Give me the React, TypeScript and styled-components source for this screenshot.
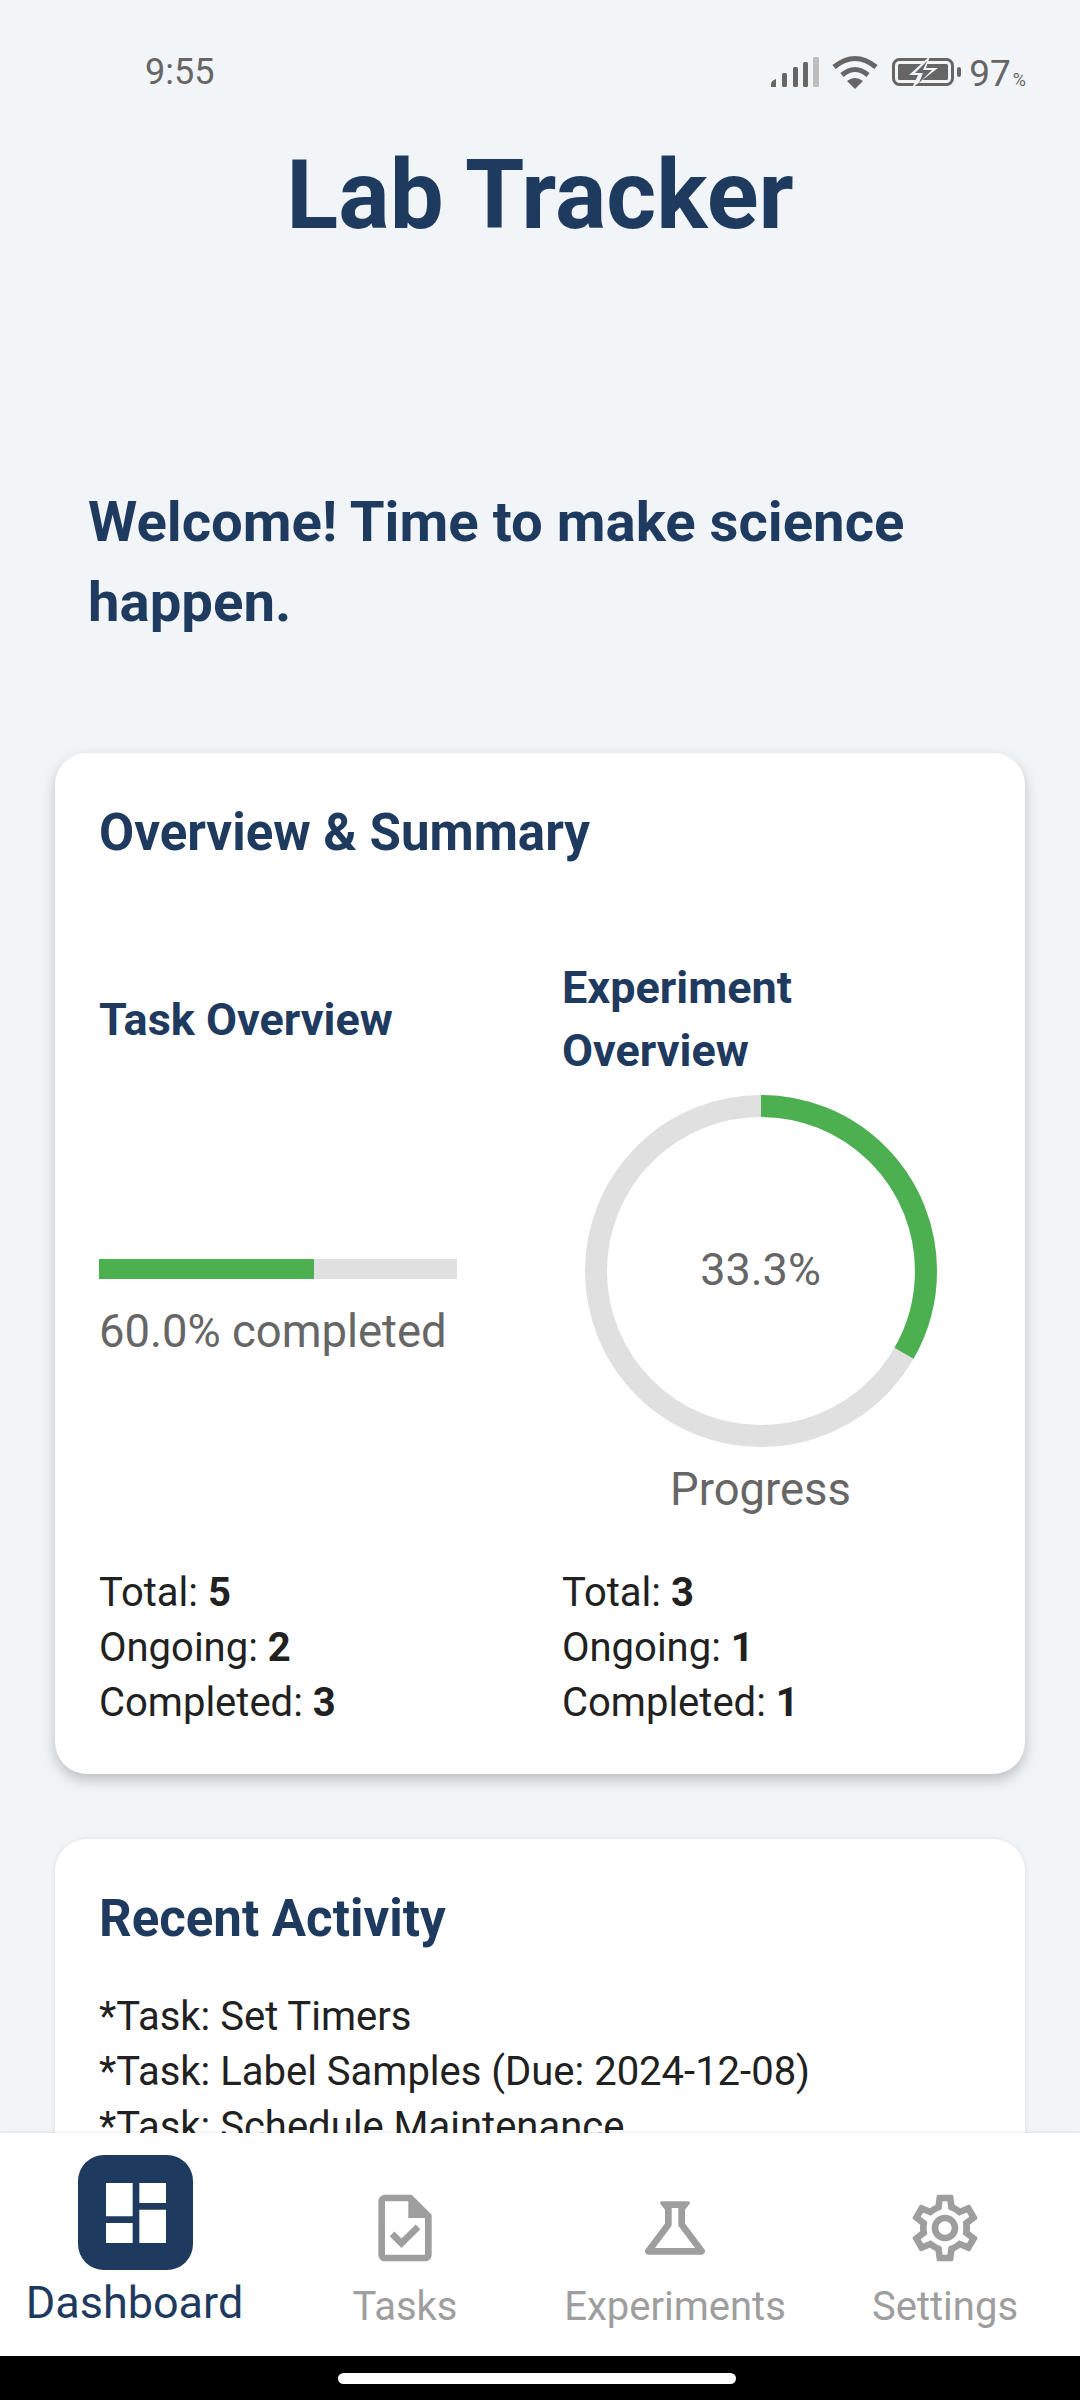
import React from "react";
import styled, { createGlobalStyle } from "styled-components";

const Global = createGlobalStyle`
  html, body { margin: 0; padding: 0; background: #f1f5f8; }
  * { box-sizing: border-box; }
`;
const Screen = styled.div`
  width: 1080px; height: 2400px; display: flex; flex-direction: column; overflow: hidden;
  background: #f1f5f8; font-family: Roboto, "Liberation Sans", sans-serif; color: #212121;
`;
const StatusBar = styled.div`
  height: 106px; flex: none; padding: 38px 54px 0 145px; display: flex; justify-content: space-between; align-items: center;
  color: #666; font-size: 36px; line-height: 68px;
`;
const StatusIcons = styled.div`display: flex; align-items: center; font-size: 37px;`;
const SignalWrap = styled.span`display: flex; margin-right: 13px;`;
const WifiWrap = styled.span`display: flex; margin-right: 14px;`;
const BatteryWrap = styled.span`display: flex; margin-right: 8px;`;
const Percent = styled.span`display: block; line-height: 44px; height: 44px; margin-top: 4px;`;
const Pct = styled.span`font-size: 18px; margin-left: 2px;`;
const Title = styled.h1`
  margin: 38px 0 0; height: 102px; line-height: 102px; text-align: center; font-size: 96px; font-weight: 700; color: #1f3a5f;
`;
const Scroll = styled.div`flex: 1; min-height: 0; overflow: hidden; padding: 0 55px;`;
const Welcome = styled.p`
  margin: 236px 0 0; padding: 0 33px; font-size: 56.3px; line-height: 80px; font-weight: 700; color: #1f3a5f; height: 271px;
`;
const Card = styled.section<{ $strong?: boolean }>`
  background: #fff; border-radius: 32px; padding: 44px; margin-bottom: 65px;
  box-shadow: ${p => p.$strong ? "0 6px 14px rgba(0,0,0,.22)" : "0 1px 6px rgba(0,0,0,.1)"};
`;
const CardTitle = styled.h2`margin: 0; font-size: 51px; line-height: 72px; font-weight: 700; color: #1f3a5f;`;
const Columns = styled.div`display: grid; grid-template-columns: 463px 1fr; margin-top: 87px;`;
const Column = styled.div`display: flex; flex-direction: column; min-width: 0;`;
const ColHead = styled.h3`
  margin: 0; font-size: 45px; line-height: 63px; font-weight: 700; color: #1f3a5f; height: 126px; display: flex; align-items: center; width: 330px;
`;
const Visual = styled.div`height: 446px; display: flex; flex-direction: column; align-items: center; padding-top: 13px;`;
const TaskVisual = styled(Visual)`align-items: flex-start; justify-content: center; padding-top: 14px;`;
const Bar = styled.div`width: 358px; height: 20px; background: #e0e0e0;`;
const BarFill = styled.div`height: 100%; background: #4caf50;`;
const Caption = styled.div`font-size: 45.4px; line-height: 66px; color: #666; margin-top: 20px;`;
const RingBox = styled.div`width: 352px; height: 352px; position: relative; margin-left: -22px;`;
const RingLabel = styled.div`position: absolute; inset: 0 0 4px; display: flex; align-items: center; justify-content: center; font-size: 45px; color: #666;`;
const RingCaption = styled(Caption)`margin: 10px 0 0 -22px;`;
const Stats = styled.div`margin-top: 37px; font-size: 40px; line-height: 55px;`;
const Stat = styled.div`b { font-weight: 700; }`;
const Activity = styled.div`margin-top: 34px; font-size: 40px; line-height: 55px;`;
const Nav = styled.nav`
  height: 223px; flex: none; background: #fff; display: grid; grid-template-columns: repeat(4, 270px); box-shadow: 0 -1px 3px rgba(0,0,0,.08); position: relative;
`;
const NavItem = styled.div<{ $active?: boolean }>`
  display: flex; flex-direction: column; align-items: center; color: ${p => p.$active ? "#1f3a5f" : "#9e9e9e"};
  font-size: ${p => p.$active ? "45px" : "40px"}; padding-top: ${p => p.$active ? "22px" : "55px"};
`;
const IconPill = styled.div`
  width: 115px; height: 115px; border-radius: 26px; background: #1f3a5f; display: flex; align-items: center; justify-content: center; color: #fff; margin-left: 1px;
`;
const Label = styled.div<{ $active?: boolean }>`
  line-height: 52px; margin-top: ${p => p.$active ? "7px" : "13px"}; margin-left: ${p => p.$active ? "-1px" : "0"};
`;
const Gesture = styled.div`height: 44px; flex: none; background: #000; display: flex; justify-content: center; padding: 17px 6px 0 0;`;
const Handle = styled.div`width: 398px; height: 11px; border-radius: 6px; background: #fff;`;

const Icon = ({ d, size = 80 }: { d: string; size?: number }) => (
  <svg width={size} height={size} viewBox="0 0 24 24" fill="currentColor"><path d={d} /></svg>
);
const P = {
  dash: "M3 13h8V3H3v10zm0 8h8v-6H3v6zm10 0h8V11h-8v10zm0-18v6h8V3h-8z",
  task: "M14 2H6c-1.1 0-1.99.9-1.99 2L4 20c0 1.1.89 2 1.99 2H18c1.1 0 2-.9 2-2V8l-6-6zm4 18H6V4h7v5h5v11zm-9.18-6.95L7.4 14.46 10.94 18l5.66-5.66-1.41-1.41-4.24 4.24-2.13-2.12z",
  flask: "M13 11.33L18 18H6l5-6.67V6h2m2.96-2H8.04c-.42 0-.65.48-.39.81L9 6.5v4.17L3.2 18.4c-.49.66-.02 1.6.8 1.6h16c.82 0 1.29-.94.8-1.6L15 10.67V6.5l1.35-1.69c.26-.33.03-.81-.39-.81z",
  gear: "M19.43 12.98c.04-.32.07-.64.07-.98 0-.34-.03-.66-.07-.98l2.11-1.65c.19-.15.24-.42.12-.64l-2-3.46c-.09-.16-.26-.25-.44-.25-.06 0-.12.01-.17.03l-2.49 1c-.52-.4-1.08-.73-1.69-.98l-.38-2.65C14.46 2.18 14.25 2 14 2h-4c-.25 0-.46.18-.49.42l-.38 2.65c-.61.25-1.17.59-1.69.98l-2.49-1c-.06-.02-.12-.03-.18-.03-.17 0-.34.09-.43.25l-2 3.46c-.13.22-.07.49.12.64l2.11 1.65c-.04.32-.07.65-.07.98 0 .33.03.66.07.98l-2.11 1.65c-.19.15-.24.42-.12.64l2 3.46c.09.16.26.25.44.25.06 0 .12-.01.17-.03l2.49-1c.52.4 1.08.73 1.69.98l.38 2.65c.03.24.24.42.49.42h4c.25 0 .46-.18.49-.42l.38-2.65c.61-.25 1.17-.59 1.69-.98l2.49 1c.06.02.12.03.18.03.17 0 .34-.09.43-.25l2-3.46c.12-.22.07-.49-.12-.64l-2.11-1.65zm-1.98-1.71c.04.31.05.52.05.73 0 .21-.02.43-.05.73l-.14 1.13.89.7 1.08.84-.7 1.21-1.27-.51-1.04-.42-.9.68c-.43.32-.84.56-1.25.73l-1.06.43-.16 1.13-.2 1.35h-1.4l-.19-1.35-.16-1.13-1.06-.43c-.43-.18-.83-.41-1.23-.71l-.91-.7-1.06.43-1.27.51-.7-1.21 1.08-.84.89-.7-.14-1.13c-.03-.31-.05-.54-.05-.74s.02-.43.05-.73l.14-1.13-.89-.7-1.08-.84.7-1.21 1.27.51 1.04.42.9-.68c.43-.32.84-.56 1.25-.73l1.06-.43.16-1.13.2-1.35h1.39l.19 1.35.16 1.13 1.06.43c.43.18.83.41 1.23.71l.91.7 1.06-.43 1.27-.51.7 1.21-1.07.85-.89.7.14 1.13zM12 8c-2.21 0-4 1.79-4 4s1.79 4 4 4 4-1.79 4-4-1.79-4-4-4zm0 6c-1.1 0-2-.9-2-2s.9-2 2-2 2 .9 2 2-.9 2-2 2z",
};

const Signal = () => (
  <svg width="48" height="32" viewBox="0 0 48 32" fill="#666">
    <path d="M0 31v-3q0-3 5-5v8z" />
    <rect x="11" y="17" width="5" height="14" rx="1.5" />
    <rect x="22" y="11" width="5" height="20" rx="1.5" />
    <rect x="32" y="6" width="5" height="25" rx="1.5" />
    <rect x="42" y="1" width="6" height="30" rx="1.5" fill="#bdbdbd" />
  </svg>
);
const Wifi = () => (
  <svg width="46" height="34" viewBox="0 0 46 34" fill="none" stroke="#666" strokeWidth="5">
    <path d="M2 12 Q23 -5 44 12" />
    <path d="M10 20 Q23 9 36 20" />
    <path d="M23 34 L15 26 Q23 20 31 26 Z" fill="#666" stroke="none" />
  </svg>
);
const Battery = () => (
  <svg width="69" height="32" viewBox="0 0 69 32">
    <rect x="1.5" y="3.5" width="59" height="25" rx="6" fill="none" stroke="#666" strokeWidth="3" />
    <rect x="6" y="8" width="50" height="16" rx="1.5" fill="#666" />
    <path d="M38 0 L17 19 H26 L20 32 L46 12 H34 Z" fill="#f1f5f8" />
    <path d="M35 5 L23 17 H31 L27 27 L40 14 H31 Z" fill="#666" />
    <rect x="65" y="11" width="4" height="10" rx="2" fill="#666" />
  </svg>
);

const StatList = ({ total, ongoing, completed }: { total: number; ongoing: number; completed: number }) => (
  <Stats>
    <Stat>Total: <b>{total}</b></Stat>
    <Stat>Ongoing: <b>{ongoing}</b></Stat>
    <Stat>Completed: <b>{completed}</b></Stat>
  </Stats>
);

const R = 165;
const C = 2 * Math.PI * R;

export default function App() {
  return (
    <Screen>
      <Global />
      <StatusBar>
        <span>9:55</span>
        <StatusIcons>
          <SignalWrap><Signal /></SignalWrap>
          <WifiWrap><Wifi /></WifiWrap>
          <BatteryWrap><Battery /></BatteryWrap>
          <Percent>97<Pct>%</Pct></Percent>
        </StatusIcons>
      </StatusBar>
      <Title>Lab Tracker</Title>
      <Scroll>
        <Welcome>Welcome! Time to make science happen.</Welcome>
        <Card $strong>
          <CardTitle>Overview &amp; Summary</CardTitle>
          <Columns>
            <Column>
              <ColHead>Task Overview</ColHead>
              <TaskVisual>
                <Bar><BarFill style={{ width: "60%" }} /></Bar>
                <Caption>60.0% completed</Caption>
              </TaskVisual>
              <StatList total={5} ongoing={2} completed={3} />
            </Column>
            <Column>
              <ColHead>Experiment Overview</ColHead>
              <Visual>
                <RingBox>
                  <svg width="352" height="352" viewBox="0 0 352 352">
                    <circle cx="176" cy="176" r={R} fill="none" stroke="#e0e0e0" strokeWidth="22" />
                    <circle cx="176" cy="176" r={R} fill="none" stroke="#4caf50" strokeWidth="22"
                      strokeDasharray={`${C * 0.333} ${C}`} transform="rotate(-90 176 176)" />
                  </svg>
                  <RingLabel>33.3%</RingLabel>
                </RingBox>
                <RingCaption>Progress</RingCaption>
              </Visual>
              <StatList total={3} ongoing={1} completed={1} />
            </Column>
          </Columns>
        </Card>
        <Card>
          <CardTitle>Recent Activity</CardTitle>
          <Activity>
            <div>*Task: Set Timers</div>
            <div>*Task: Label Samples (Due: 2024-12-08)</div>
            <div>*Task: Schedule Maintenance</div>
          </Activity>
        </Card>
      </Scroll>
      <Nav>
        <NavItem $active>
          <IconPill><Icon d={P.dash} /></IconPill>
          <Label $active>Dashboard</Label>
        </NavItem>
        <NavItem><Icon d={P.task} /><Label>Tasks</Label></NavItem>
        <NavItem><Icon d={P.flask} /><Label>Experiments</Label></NavItem>
        <NavItem><Icon d={P.gear} /><Label>Settings</Label></NavItem>
      </Nav>
      <Gesture><Handle /></Gesture>
    </Screen>
  );
}
